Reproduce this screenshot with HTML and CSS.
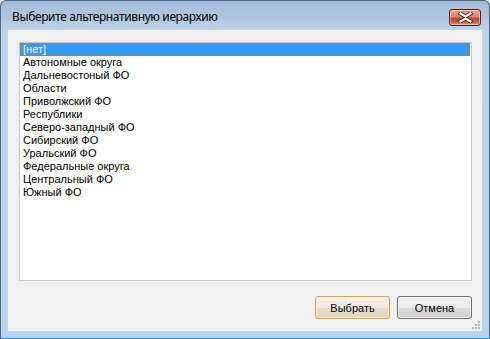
FILE: index.html
```html
<!DOCTYPE html>
<html lang="ru">
<head>
<meta charset="utf-8">
<link rel="stylesheet" href="styles.css">
</head>
<body>
<div class="window">
  <div class="titlebar">
    <span class="title">Выберите альтернативную иерархию</span>
    <button class="close" aria-label="Закрыть">
      <svg width="17" height="11" viewBox="0 0 17 11">
        <path d="M3.5 1.5 L8.5 4.5 L13.5 1.5 M3.5 9.5 L8.5 6.5 L13.5 9.5" fill="none" stroke="#3a2a2a" stroke-width="4" stroke-linecap="square" stroke-linejoin="miter"/>
        <path d="M3.5 1.5 L8.5 4.5 L13.5 1.5 M3.5 9.5 L8.5 6.5 L13.5 9.5" fill="none" stroke="#f4f4f4" stroke-width="2.2" stroke-linecap="square"/>
      </svg>
    </button>
  </div>
  <div class="client">
    <ul class="listbox">
      <li class="item selected">[нет]</li>
      <li class="item">Автономные округа</li>
      <li class="item">Дальневостоный ФО</li>
      <li class="item">Области</li>
      <li class="item">Приволжский ФО</li>
      <li class="item">Республики</li>
      <li class="item">Северо-западный ФО</li>
      <li class="item">Сибирский ФО</li>
      <li class="item">Уральский ФО</li>
      <li class="item">Федеральные округа</li>
      <li class="item">Центральный ФО</li>
      <li class="item">Южный ФО</li>
    </ul>
    <div class="footer">
      <button class="btn default">Выбрать</button>
      <button class="btn">Отмена</button>
      <span class="grip">
        <svg width="10" height="10" viewBox="0 0 10 10">
          <g fill="#b8b8b8">
            <rect x="7" y="1" width="2" height="2"/>
            <rect x="4" y="4" width="2" height="2"/>
            <rect x="7" y="4" width="2" height="2"/>
            <rect x="1" y="7" width="2" height="2"/>
            <rect x="4" y="7" width="2" height="2"/>
            <rect x="7" y="7" width="2" height="2"/>
          </g>
        </svg>
      </span>
    </div>
  </div>
</div>
</body>
</html>
```
FILE: styles.css
```css
html, body {
  margin: 0;
  padding: 0;
  background: #ffffff;
}
.window {
  box-sizing: border-box;
  width: 490px;
  height: 339px;
  border: 1px solid #4f6682;
  border-bottom-color: #1fa5c8;
  border-radius: 6px 6px 0 0;
  background: linear-gradient(to bottom, #a3bcd6 0px, #aec5de 14px, #bcd3ea 30px, #bad2ea 100%);
  padding: 0 7px 7px 7px;
  display: flex;
  flex-direction: column;
  font-family: "Liberation Sans", Arial, sans-serif;
}
.titlebar {
  height: 29px;
  display: flex;
  align-items: center;
  justify-content: space-between;
  padding-left: 4px;
}
.title {
  font-family: "Noto Sans", "Open Sans", sans-serif;
  font-size: 12px;
  letter-spacing: -0.38px;
  color: #000;
  margin-top: 1px;
}
.close {
  width: 32px;
  height: 17px;
  margin-top: 4px;
  margin-right: 1px;
  padding: 0;
  border: 1px solid #5a1e22;
  border-radius: 3px;
  background: linear-gradient(to bottom, #e8a595 0%, #d88470 45%, #c4452c 55%, #cc5a40 80%, #e09a7e 100%);
  display: flex;
  align-items: center;
  justify-content: center;
  box-shadow: inset 0 0 0 1px rgba(255,220,210,0.55);
}
.close svg { display: block; }
.client {
  flex: 1;
  background: #f0f0f0;
  padding: 12px 10px 12px 11px;
  display: flex;
  flex-direction: column;
  position: relative;
}
.listbox {
  flex: 1;
  margin: 0;
  padding: 0;
  list-style: none;
  background: #ffffff;
  border: 1px solid #c9c9c9;
}
.item {
  height: 13px;
  line-height: 13px;
  font-size: 11px;
  padding-left: 3px;
  margin-right: 1px;
  color: #000;
  box-sizing: border-box;
  white-space: nowrap;
}
.item.selected {
  background: #3399ff;
  color: #ffffff;
  outline: 1px dotted #e07000;
  outline-offset: -1px;
  padding-left: 3px;
}
.footer {
  margin-top: 15px;
  display: flex;
  justify-content: flex-end;
  gap: 7px;
  padding-right: 0;
}
.btn {
  width: 75px;
  height: 23px;
  border: 1px solid #707070;
  border-radius: 3px;
  background: linear-gradient(to bottom, #f2f2f2 0%, #ebebeb 50%, #dddddd 51%, #cfcfcf 100%);
  font-family: "Liberation Sans", Arial, sans-serif;
  font-size: 11px;
  color: #000;
  padding: 0;
  box-shadow: inset 0 0 0 1px rgba(255,255,255,0.7);
}
.btn.default {
  border-color: #e5a540;
  background: linear-gradient(to bottom, #f7f3ec 0%, #f1ebe1 50%, #e8dfd0 51%, #e0d5c2 100%);
  box-shadow: inset 0 0 0 1px rgba(255,236,190,0.9);
}
.grip {
  position: absolute;
  right: 1px;
  bottom: 1px;
  width: 10px;
  height: 10px;
}
.grip svg { display: block; }
```
